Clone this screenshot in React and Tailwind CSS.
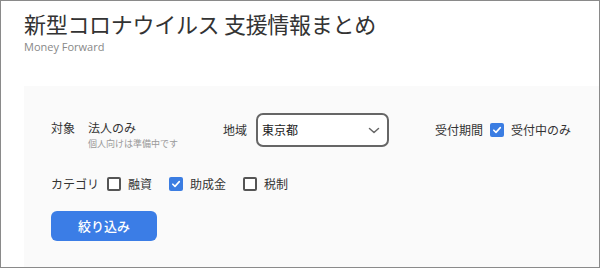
import { useState } from 'react';

const jp = { fontFamily: '"Noto Sans CJK JP", "Noto Sans", sans-serif' };

function Check({ checked, onChange }) {
  return (
    <button
      type="button"
      onClick={onChange}
      className={`w-[14px] h-[14px] rounded-[2px] flex items-center justify-center shrink-0 ${
        checked ? 'bg-[#3b7de2] border-0' : 'bg-white border-2 border-[#555]'
      }`}
    >
      {checked && (
        <svg width="10" height="10" viewBox="0 0 10 10" fill="none">
          <path d="M1.8 5.2 L4 7.4 L8.3 2.6" stroke="white" strokeWidth="1.6" strokeLinecap="round" strokeLinejoin="round" />
        </svg>
      )}
    </button>
  );
}

export default function App() {
  const [open, setOpen] = useState(true);
  const [cats, setCats] = useState({ loan: false, grant: true, tax: false });
  const toggle = (k) => setCats({ ...cats, [k]: !cats[k] });

  return (
    <div className="w-[600px] h-[268px] border border-[#8a8a8a] bg-white flex flex-col text-[#333]" style={jp}>
      {/* Header */}
      <div className="pl-[23px] pt-[8px]">
        <h1 className="text-[22px] leading-[28px] font-normal text-[#333] tracking-[-0.3px]">
          新型コロナウイルス 支援情報まとめ
        </h1>
        <p className="mt-[3px] text-[11px] leading-[14px] text-[#888]" style={{ fontFamily: '"Open Sans", "Noto Sans", sans-serif' }}>
          Money Forward
        </p>
      </div>

      {/* Filter panel */}
      <div className="ml-[23px] mt-[32px] flex-1 bg-[#fafafa] pl-[27px] pt-[27px]">
        <div className="flex items-center h-[34px]">
          <div className="w-[172px] self-start mt-[6px] flex text-[12px]">
            <span className="w-[37px] leading-[18px]">対象</span>
            <div>
              <div className="leading-[18px]">法人のみ</div>
              <div className="text-[9px] leading-[12px] text-[#999] mt-[1px]">個人向けは準備中です</div>
            </div>
          </div>
          <span className="text-[12px] w-[33px]">地域</span>
          <div className="w-[133px] h-[34px] border-2 border-[#666] rounded-[7px] bg-white flex items-center justify-between pl-[4px] pr-[7px]">
            <span className="text-[12px] text-[#222]">東京都</span>
            <svg width="12" height="7" viewBox="0 0 12 7" fill="none">
              <path d="M1.5 1.5 L6 5.5 L10.5 1.5" stroke="#666" strokeWidth="1.5" strokeLinecap="round" strokeLinejoin="round" />
            </svg>
          </div>
          <span className="text-[12px] ml-[46px]">受付期間</span>
          <div className="ml-[7px]">
            <Check checked={open} onChange={() => setOpen(!open)} />
          </div>
          <span className="text-[12px] ml-[7px]">受付中のみ</span>
        </div>

        <div className="flex items-center h-[20px] mt-[27px] text-[12px]">
          <span className="w-[56px]">カテゴリ</span>
          <Check checked={cats.loan} onChange={() => toggle('loan')} />
          <span className="ml-[7px] w-[41px]">融資</span>
          <Check checked={cats.grant} onChange={() => toggle('grant')} />
          <span className="ml-[7px] w-[53px]">助成金</span>
          <Check checked={cats.tax} onChange={() => toggle('tax')} />
          <span className="ml-[7px]">税制</span>
        </div>

        <button
          type="button"
          className="mt-[17px] w-[106px] h-[30px] rounded-[6px] bg-[#3b7de6] text-white text-[13px] font-medium flex items-center justify-center"
        >
          絞り込み
        </button>
      </div>
    </div>
  );
}
